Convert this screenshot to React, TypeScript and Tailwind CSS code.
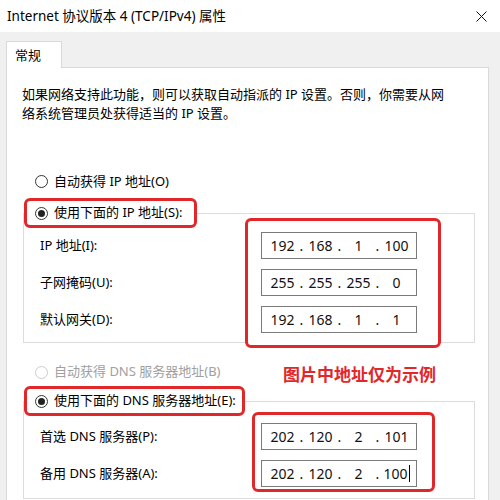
function Radio({ checked = false, disabled = false }: { checked?: boolean; disabled?: boolean }) {
  return (
    <span
      className={`flex h-[13px] w-[13px] shrink-0 items-center justify-center rounded-full border bg-white ${
        disabled ? 'border-[#cccccc]' : 'border-[#333333]'
      }`}
    >
      {checked && <span className="h-[7px] w-[7px] rounded-full bg-[#222222]" />}
    </span>
  )
}

function IpBox({ parts, caret = false }: { parts: string[]; caret?: boolean }) {
  return (
    <div className="flex h-[27px] w-[156px] items-center border border-[#7a7a7a] bg-white pl-[4px] text-[14px] text-[#111]">
      {parts.map((p, i) => (
        <div key={i} className="flex items-center">
          {i > 0 && <span className="w-[5px] text-center">.</span>}
          <span className="flex w-[33px] items-center justify-center">
            {p}
            {caret && i === 3 && <span className="ml-px h-[17px] w-px bg-black" />}
          </span>
        </div>
      ))}
    </div>
  )
}

export default function App() {
  return (
    <div className="h-[500px] w-[500px] overflow-hidden bg-[#f0f0f0] font-['Noto_Sans','Noto_Sans_CJK_SC',sans-serif] text-black">
      {/* title bar */}
      <div className="flex h-[32px] items-center justify-between bg-white pl-[7px] pr-[13px]">
        <span className="text-[13.5px] leading-[20px]">Internet 协议版本 4 (TCP/IPv4) 属性</span>
        <svg width="11" height="11" viewBox="0 0 11 11" aria-hidden>
          <path d="M0.5 0.5 L10.5 10.5 M10.5 0.5 L0.5 10.5" stroke="#111" strokeWidth="1" />
        </svg>
      </div>

      <div className="pl-[6px] pr-[11px] pt-[9px]">
        <div className="flex">
          <div className="relative z-10 -mb-px h-[27px] w-[56px] border border-b-0 border-[#d9d9d9] bg-white pl-[8px] text-[13px] leading-[26px]">
            常规
          </div>
        </div>

        <div className="h-[480px] border border-[#d9d9d9] bg-white pl-[15px] pr-[14px] pt-[17px]">
          <p className="text-[13px] leading-[19px]">
            如果网络支持此功能，则可以获取自动指派的 IP 设置。否则，你需要从网
            <br />
            络系统管理员处获得适当的 IP 设置。
          </p>

          <div className="mt-[48px] flex h-[21px] items-center gap-[6px] pl-[13px] text-[13px]">
            <Radio />
            <span>自动获得 IP 地址(O)</span>
          </div>

          <fieldset className="ml-px mt-[6px] w-[452px] border border-[#dcdcdc] p-0">
            <legend className="flex h-[30px] w-[173px] items-center gap-[6px] rounded-[6px] border-[3px] border-[#e0282a] pl-[8px] text-[13px]">
              <Radio checked />
              <span>使用下面的 IP 地址(S):</span>
            </legend>
            <div className="-mt-[10px] flex">
              <div className="flex w-[221px] flex-col gap-[10px] pl-[16px] pt-[14px] text-[13px]">
                <div className="flex h-[27px] items-center">IP 地址(I):</div>
                <div className="flex h-[27px] items-center">子网掩码(U):</div>
                <div className="flex h-[27px] items-center">默认网关(D):</div>
              </div>
              <div className="-mb-[6px] flex w-[196px] flex-col gap-[10px] rounded-[6px] border-[3px] border-[#e0282a] bg-white pb-[12px] pl-[13px] pt-[11px]">
                <IpBox parts={['192', '168', '1', '100']} />
                <IpBox parts={['255', '255', '255', '0']} />
                <IpBox parts={['192', '168', '1', '1']} />
              </div>
            </div>
          </fieldset>

          <div className="mt-[18px] flex h-[25px] items-start">
            <div className="flex h-[22px] w-[261px] items-center gap-[6px] pl-[13px] text-[13px] text-[#a0a0a0]">
              <Radio disabled />
              <span>自动获得 DNS 服务器地址(B)</span>
            </div>
            <span className="mt-[2px] text-[17px] font-bold leading-[24px] text-[#e2262a]">图片中地址仅为示例</span>
          </div>

          <fieldset className="ml-px w-[452px] border border-[#dcdcdc] p-0">
            <legend className="flex h-[30px] w-[221px] items-center gap-[6px] rounded-[6px] border-[3px] border-[#e0282a] pl-[8px] text-[13px]">
              <Radio checked />
              <span>使用下面的 DNS 服务器地址(E):</span>
            </legend>
            <div className="-mt-[4px] flex pb-[6px]">
              <div className="flex w-[228px] flex-col gap-[10px] pl-[16px] pt-[11px] text-[13px]">
                <div className="flex h-[27px] items-center">首选 DNS 服务器(P):</div>
                <div className="flex h-[27px] items-center">备用 DNS 服务器(A):</div>
              </div>
              <div className="flex w-[183px] flex-col gap-[10px] rounded-[6px] border-[3px] border-[#e0282a] bg-white pb-[2px] pl-[6px] pt-[8px]">
                <IpBox parts={['202', '120', '2', '101']} />
                <IpBox parts={['202', '120', '2', '100']} caret />
              </div>
            </div>
          </fieldset>
        </div>
      </div>
    </div>
  )
}
